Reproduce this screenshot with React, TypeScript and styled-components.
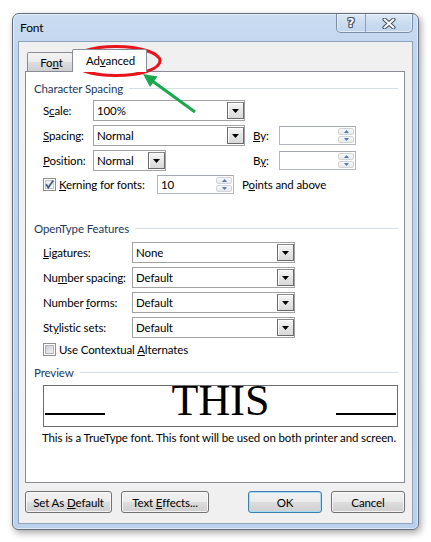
import React from 'react';
import styled, { createGlobalStyle } from 'styled-components';

const GlobalStyle = createGlobalStyle`
  html, body {
    margin: 0;
    padding: 0;
    background: #ffffff;
  }
  body {
    font-family: Lato, 'Noto Sans', sans-serif;
    font-size: 11.5px;
    letter-spacing: -0.12px;
    color: #000000;
  }
`;

const Page = styled.div`
  position: relative;
  width: 431px;
  height: 542px;
  box-sizing: border-box;
  padding: 13px 0 0 12px;
`;

const Window = styled.div`
  width: 407px;
  height: 517px;
  box-sizing: border-box;
  display: flex;
  flex-direction: column;
  border: 1px solid #5f6d7e;
  border-radius: 7px 7px 6px 6px;
  background: linear-gradient(180deg, #cadcf2 0%, #c0d5ee 8%, #bad0eb 100%);
  box-shadow: 2px 3px 7px rgba(0, 0, 0, 0.35), inset 0 0 0 1px rgba(255, 255, 255, 0.55);
`;

const TitleBar = styled.div`
  height: 27px;
  flex: none;
  display: flex;
  align-items: center;
  justify-content: space-between;
  padding: 0 5px 0 7px;
`;

const Title = styled.span`
  font-size: 12px;
  color: #000000;
`;

const CaptionButtons = styled.div`
  align-self: flex-start;
  display: flex;
  height: 18px;
  border: 1px solid #7b8da6;
  border-top: none;
  border-radius: 0 0 5px 5px;
  overflow: hidden;
  background: linear-gradient(180deg, #dde8f6 0%, #cbdcf0 50%, #c2d5ed 100%);
  box-shadow: inset 0 0 0 1px rgba(255, 255, 255, 0.5);
`;

const CaptionButton = styled.div<{ $width: number; $divider?: boolean }>`
  width: ${({ $width }) => $width}px;
  display: flex;
  align-items: center;
  justify-content: center;
  border-right: ${({ $divider }) => ($divider ? '1px solid #8c9db4' : 'none')};
`;

const HelpGlyph = styled.span`
  font-family: 'DejaVu Sans', sans-serif;
  font-weight: bold;
  font-size: 12px;
  line-height: 12px;
  color: #ffffff;
  text-shadow: 1px 0 0 #4a576a, -1px 0 0 #4a576a, 0 1px 0 #4a576a, 0 -1px 0 #4a576a,
    1px 1px 0 #4a576a, -1px -1px 0 #4a576a, 1px -1px 0 #4a576a, -1px 1px 0 #4a576a;
`;

const Client = styled.div`
  flex: 1;
  display: flex;
  flex-direction: column;
  margin: 0 5px 5px 5px;
  padding: 7px 7px 10px 6px;
  border: 1px solid #8ea2bb;
  background: #f0f0f0;
`;

const TabStrip = styled.div`
  display: flex;
  align-items: flex-end;
  height: 22px;
  padding-left: 2px;
  position: relative;
  z-index: 1;
`;

const Tab = styled.div<{ $width: number; $active?: boolean }>`
  box-sizing: border-box;
  width: ${({ $width }) => $width}px;
  height: ${({ $active }) => ($active ? 23 : 19)}px;
  margin-bottom: ${({ $active }) => ($active ? -1 : 0)}px;
  margin-left: ${({ $active }) => ($active ? -1 : 0)}px;
  display: flex;
  align-items: center;
  justify-content: center;
  padding: ${({ $active }) => ($active ? '0 0 1px 2px' : '1px 0 0 3px')};
  border: 1px solid #898c95;
  border-bottom: none;
  border-radius: 2px 2px 0 0;
  background: ${({ $active }) =>
    $active ? '#ffffff' : 'linear-gradient(180deg, #f3f3f3 0%, #ebebeb 50%, #dddddd 50%, #cfcfcf 100%)'};
`;

const Panel = styled.div`
  height: 412px;
  box-sizing: border-box;
  display: flex;
  flex-direction: column;
  padding: 8px 6px 0 8px;
  border: 1px solid #898c95;
  background: #ffffff;
`;

const SectionHeader = styled.div<{ $top: number }>`
  display: flex;
  align-items: center;
  gap: 6px;
  height: 16px;
  margin-top: ${({ $top }) => $top}px;
  color: #1e395b;
  white-space: nowrap;

  &::after {
    content: '';
    flex: 1;
    height: 1px;
    background: #d5dfe5;
  }
`;

const FieldGrid = styled.div<{ $columns: string; $top: number }>`
  display: grid;
  grid-template-columns: ${({ $columns }) => $columns};
  grid-auto-rows: 21px;
  row-gap: 4px;
  align-items: center;
  margin: ${({ $top }) => $top}px 0 0 9px;
`;

const Label = styled.span`
  white-space: nowrap;
`;

const Key = styled.span`
  text-decoration: underline;
  text-underline-offset: 1px;
`;

const Combo = styled.div<{ $width: number }>`
  box-sizing: border-box;
  width: ${({ $width }) => $width}px;
  height: 21px;
  display: flex;
  align-items: stretch;
  border: 1px solid #a2a2a2;
  background: #ffffff;
`;

const ComboText = styled.span`
  flex: 1;
  display: flex;
  align-items: center;
  padding-left: 3px;
`;

const DropButton = styled.div`
  width: 17px;
  box-sizing: border-box;
  margin: 1px 0 1px 0;
  display: flex;
  align-items: center;
  justify-content: center;
  border: 1px solid #6a6a6a;
  border-top-color: #8a8a8a;
  background: linear-gradient(180deg, #f6f6f6 0%, #e6e6e6 50%, #d9d9d9 100%);
  box-shadow: inset 1px 1px 0 #ffffff;
`;

const SpinBox = styled.div<{ $width: number }>`
  box-sizing: border-box;
  width: ${({ $width }) => $width}px;
  height: 19px;
  display: flex;
  align-items: stretch;
  border: 1px solid #b2b7c0;
  border-top-color: #a4a9b1;
  background: #ffffff;
`;

const SpinText = styled.span`
  flex: 1;
  display: flex;
  align-items: center;
  padding-left: 3px;
`;

const SpinButtons = styled.div`
  width: 16px;
  margin: 1px 1px 1px 0;
  display: flex;
  flex-direction: column;
  gap: 1px;
`;

const SpinHalf = styled.div`
  flex: 1;
  display: flex;
  align-items: center;
  justify-content: center;
  border: 1px solid #d0d5dc;
  border-radius: 2px;
  background: linear-gradient(180deg, #f7f7f7 0%, #e9e9e9 100%);
`;

const CheckRow = styled.div<{ $top: number }>`
  display: flex;
  align-items: center;
  height: ${({ $top }) => ($top > 3 ? 19 : 16)}px;
  margin: ${({ $top }) => $top}px 0 0 9px;
`;

const CheckLabel = styled.span<{ $width?: number }>`
  margin-left: 3px;
  width: ${({ $width }) => ($width ? `${$width}px` : 'auto')};
  white-space: nowrap;
`;

const Suffix = styled.span`
  margin-left: 8px;
  white-space: nowrap;
`;

const PreviewBox = styled.div`
  height: 42px;
  box-sizing: border-box;
  margin: 5px 0 0 9px;
  display: flex;
  align-items: flex-end;
  justify-content: space-between;
  border: 1px solid #6d6d6d;
  background: #ffffff;
`;

const PreviewRule = styled.div`
  width: 60px;
  height: 2px;
  margin: 0 1px 11px 1px;
  background: #000000;
`;

const PreviewSample = styled.span`
  font-family: 'Liberation Serif', 'Times New Roman', serif;
  font-size: 44px;
  line-height: 28px;
  letter-spacing: 0;
  margin-bottom: 11px;
  color: #000000;
`;

const Caption = styled.div`
  margin: 3px 0 0 8px;
  line-height: 16px;
  white-space: nowrap;
`;

const ButtonRow = styled.div`
  display: flex;
  gap: 9px;
  margin-top: 8px;
`;

const PushButton = styled.div<{ $width: number; $default?: boolean; $push?: boolean }>`
  box-sizing: border-box;
  width: ${({ $width }) => $width}px;
  height: 22px;
  margin-left: ${({ $push }) => ($push ? 'auto' : '0')};
  display: flex;
  align-items: center;
  justify-content: center;
  border: 1px solid ${({ $default }) => ($default ? '#3c7fb1' : '#707070')};
  border-radius: 3px;
  background: linear-gradient(180deg, #f2f2f2 0%, #ebebeb 50%, #dddddd 50%, #cfcfcf 100%);
  box-shadow: inset 0 0 0 1px ${({ $default }) => ($default ? '#a6dcf6' : 'rgba(255, 255, 255, 0.75)')};
  white-space: nowrap;
`;

const Overlay = styled.svg`
  position: absolute;
  left: 0;
  top: 0;
  pointer-events: none;
`;

function DownArrow() {
  return (
    <svg width="7" height="4" viewBox="0 0 7 4">
      <polygon points="0,0 7,0 3.5,4" fill="#000000" />
    </svg>
  );
}

function SpinArrow({ up }: { up?: boolean }) {
  return (
    <svg width="5" height="3" viewBox="0 0 5 3">
      <polygon points={up ? '0,3 5,3 2.5,0' : '0,0 5,0 2.5,3'} fill="#5677b3" />
    </svg>
  );
}

function Dropdown({ width, value }: { width: number; value: string }) {
  return (
    <Combo $width={width}>
      <ComboText>{value}</ComboText>
      <DropButton>
        <DownArrow />
      </DropButton>
    </Combo>
  );
}

function Spinner({ value }: { value?: string }) {
  return (
    <SpinBox $width={77}>
      <SpinText>{value}</SpinText>
      <SpinButtons>
        <SpinHalf>
          <SpinArrow up />
        </SpinHalf>
        <SpinHalf>
          <SpinArrow />
        </SpinHalf>
      </SpinButtons>
    </SpinBox>
  );
}

function CheckBox({ checked }: { checked?: boolean }) {
  return (
    <svg width="13" height="13" viewBox="0 0 13 13">
      <defs>
        <linearGradient id={checked ? 'cbOn' : 'cbOff'} x1="0" y1="0" x2="1" y2="1">
          <stop offset="0" stopColor={checked ? '#e4e6e9' : '#c9cdd2'} />
          <stop offset="1" stopColor={checked ? '#fbfbfb' : '#f3f3f3'} />
        </linearGradient>
      </defs>
      <rect x="0.5" y="0.5" width="12" height="12" fill="#ffffff" stroke="#8e8f8f" />
      <rect x="2.5" y="2.5" width="8" height="8" fill={`url(#${checked ? 'cbOn' : 'cbOff'})`} stroke={checked ? '#c6c9ce' : '#b0b4ba'} />
      {checked && (
        <path d="M3 6.3 L5.3 9.6 L10.2 2.6" fill="none" stroke="#4a5f8c" strokeWidth="1.8" />
      )}
    </svg>
  );
}

function CloseGlyph() {
  return (
    <svg width="14" height="11" viewBox="0 0 14 11">
      <path d="M2.5 1.5 L11.5 9.5 M11.5 1.5 L2.5 9.5" stroke="#4a576a" strokeWidth="4.2" strokeLinecap="round" />
      <path d="M2.5 1.5 L11.5 9.5 M11.5 1.5 L2.5 9.5" stroke="#ffffff" strokeWidth="2" strokeLinecap="round" />
    </svg>
  );
}

export default function App() {
  return (
    <Page>
      <GlobalStyle />
      <Window>
        <TitleBar>
          <Title>Font</Title>
          <CaptionButtons>
            <CaptionButton $width={28} $divider>
              <HelpGlyph>?</HelpGlyph>
            </CaptionButton>
            <CaptionButton $width={46}>
              <CloseGlyph />
            </CaptionButton>
          </CaptionButtons>
        </TitleBar>

        <Client>
          <TabStrip>
            <Tab $width={46}>
              <span>
                Fo<Key>n</Key>t
              </span>
            </Tab>
            <Tab $width={75} $active>
              <span>
                Ad<Key>v</Key>anced
              </span>
            </Tab>
          </TabStrip>

          <Panel>
            <SectionHeader $top={0}>Character Spacing</SectionHeader>
            <FieldGrid $columns="50px 160px 26px 77px" $top={4}>
              <Label>
                S<Key>c</Key>ale:
              </Label>
              <Dropdown width={152} value="100%" />
              <span />
              <span />

              <Label>
                <Key>S</Key>pacing:
              </Label>
              <Dropdown width={152} value="Normal" />
              <Label>
                <Key>B</Key>y:
              </Label>
              <Spinner />

              <Label>
                <Key>P</Key>osition:
              </Label>
              <Dropdown width={73} value="Normal" />
              <Label>
                B<Key>y</Key>:
              </Label>
              <Spinner />
            </FieldGrid>

            <CheckRow $top={4}>
              <CheckBox checked />
              <CheckLabel $width={98}>
                <Key>K</Key>erning for fonts:
              </CheckLabel>
              <Spinner value="10" />
              <Suffix>
                P<Key>o</Key>ints and above
              </Suffix>
            </CheckRow>

            <SectionHeader $top={26}>OpenType Features</SectionHeader>
            <FieldGrid $columns="89px 163px" $top={6}>
              <Label>
                <Key>L</Key>igatures:
              </Label>
              <Dropdown width={163} value="None" />
              <Label>
                Nu<Key>m</Key>ber spacing:
              </Label>
              <Dropdown width={163} value="Default" />
              <Label>
                Number <Key>f</Key>orms:
              </Label>
              <Dropdown width={163} value="Default" />
              <Label>
                St<Key>y</Key>listic sets:
              </Label>
              <Dropdown width={163} value="Default" />
            </FieldGrid>

            <CheckRow $top={3}>
              <CheckBox />
              <CheckLabel>
                Use Contextual <Key>A</Key>lternates
              </CheckLabel>
            </CheckRow>

            <SectionHeader $top={7}>Preview</SectionHeader>
            <PreviewBox>
              <PreviewRule />
              <PreviewSample>THIS</PreviewSample>
              <PreviewRule />
            </PreviewBox>
            <Caption>This is a TrueType font. This font will be used on both printer and screen.</Caption>
          </Panel>

          <ButtonRow>
            <PushButton $width={87}>
              <span>
                Set As <Key>D</Key>efault
              </span>
            </PushButton>
            <PushButton $width={88}>
              <span>
                Text <Key>E</Key>ffects...
              </span>
            </PushButton>
            <PushButton $width={74} $default $push>
              OK
            </PushButton>
            <PushButton $width={74}>Cancel</PushButton>
          </ButtonRow>
        </Client>
      </Window>

      <Overlay width="431" height="542" viewBox="0 0 431 542">
        <ellipse cx="116" cy="61" rx="44" ry="14.5" fill="none" stroke="#e8141c" strokeWidth="3" />
        <line x1="195" y1="112" x2="153" y2="81.5" stroke="#19a84c" strokeWidth="3" />
        <polygon points="143,74 157.5,76.5 150,87" fill="#19a84c" />
      </Overlay>
    </Page>
  );
}
